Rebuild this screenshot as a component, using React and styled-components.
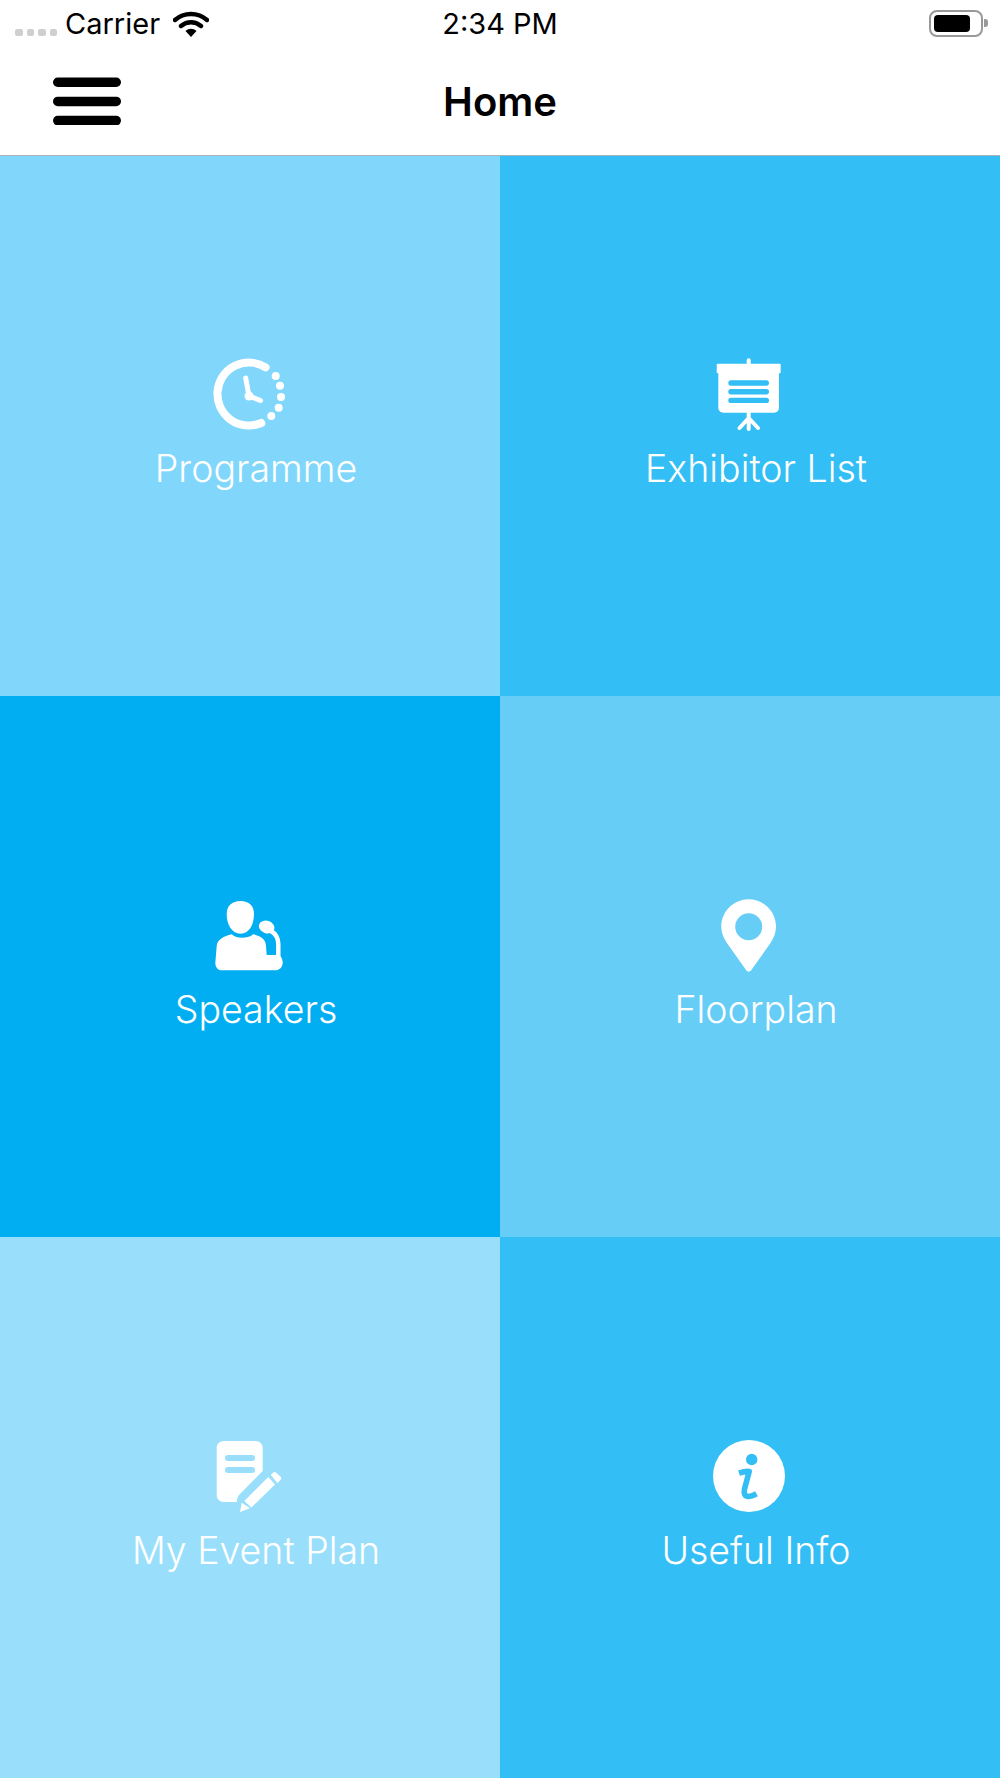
import React from "react"
import styled, { createGlobalStyle } from "styled-components"

const GlobalStyle = createGlobalStyle`
  html, body {
    margin: 0;
    padding: 0;
    background: #fff;
  }

  body {
    font-family: Inter, "Noto Sans", "Liberation Sans", sans-serif;
  }
`

const Screen = styled.div`
  display: flex;
  flex-direction: column;
  width: 1000px;
  height: 1778px;
  overflow: hidden;
`

const StatusBar = styled.div`
  display: grid;
  grid-template-columns: 1fr auto 1fr;
  align-items: center;
  box-sizing: border-box;
  height: 48px;
  padding-bottom: 2px;
  color: #000;
  font-size: 29px;
  flex: none;
`

const StatusLeft = styled.div`
  display: flex;
  align-items: center;
  padding-left: 15px;
`

const SignalDots = styled.div`
  display: flex;
  gap: 4px;
  margin: 19px 8px 0 0;
`

const SignalDot = styled.span`
  width: 7.5px;
  height: 7px;
  border-radius: 2px;
  background: #cfcfcf;
`

const Wifi = styled.svg`
  width: 36px;
  height: 26px;
  margin: 2px 0 0 13px;
`

const Battery = styled.div`
  justify-self: end;
  position: relative;
  box-sizing: border-box;
  width: 54px;
  height: 27px;
  margin-right: 17px;
  padding: 3px;
  border: 2px solid #999;
  border-radius: 8px;

  &::before {
    content: "";
    display: block;
    width: 36px;
    height: 17px;
    border-radius: 4px;
    background: #000;
  }

  &::after {
    content: "";
    position: absolute;
    top: 7px;
    right: -7px;
    width: 4px;
    height: 8px;
    border-radius: 0 3px 3px 0;
    background: #999;
  }
`

const NavBar = styled.div`
  display: grid;
  grid-template-columns: 1fr auto 1fr;
  align-items: center;
  box-sizing: border-box;
  height: 108px;
  border-bottom: 1px solid #a9b4ba;
  flex: none;
`

const MenuIcon = styled.svg`
  display: block;
  width: 68px;
  height: 48px;
  margin: 0 0 2px 53px;
  filter: blur(0.4px);
`

const Title = styled.div`
  font-size: 40px;
  font-weight: 600;
  color: #000;
`

const Grid = styled.div`
  display: grid;
  grid-template-columns: 1fr 1fr;
  grid-template-rows: 540px 541px 541px;
  flex: none;
`

const Tile = styled.div`
  display: flex;
  flex-direction: column;
  align-items: center;
  padding-top: 202.6px;
  box-sizing: border-box;
  background: ${props => props.$color};
  color: #fff;

  &:nth-child(-n + 2) {
    padding-top: 201.6px;
  }
`

const TileIcon = styled.svg`
  display: block;
  width: 72px;
  height: 73px;
  margin-right: 2px;
  overflow: visible;
`

const TileLabel = styled.div`
  margin-top: 16px;
  padding-left: 12px;
  font-size: 37.5px;
  line-height: 44px;
  font-weight: 300;
`

const ClockIcon = () => (
  <TileIcon viewBox="0 0 72 73">
    <path
      d="M52.6 9.3A31.5 31.5 0 1 0 48.3 65"
      fill="none"
      stroke="#fff"
      strokeWidth="8"
      strokeLinecap="round"
    />
    <circle cx="62.7" cy="18" r="4" fill="#fff" />
    <circle cx="67" cy="27.7" r="4" fill="#fff" />
    <circle cx="68" cy="39" r="4" fill="#fff" />
    <circle cx="65.7" cy="49.7" r="4" fill="#fff" />
    <circle cx="58.3" cy="58" r="4" fill="#fff" />
    <path
      d="M32.7 20L36 38L47.5 42.5"
      fill="none"
      stroke="#fff"
      strokeWidth="5"
      strokeLinecap="round"
      strokeLinejoin="round"
    />
    <circle cx="36" cy="38" r="4.5" fill="#fff" />
  </TileIcon>
)

const BoardIcon = ({ color }) => (
  <TileIcon viewBox="0 0 72 73">
    <rect x="33.7" y="0.3" width="4" height="7" rx="2" fill="#fff" />
    <rect x="3.7" y="5.7" width="64" height="9.5" rx="1" fill="#fff" />
    <rect x="5.3" y="10" width="60.7" height="44.7" rx="5" fill="#fff" />
    <rect x="15.3" y="22.3" width="40.7" height="5.4" rx="2.7" fill={color} />
    <rect x="15.3" y="31" width="40.7" height="5.4" rx="2.7" fill={color} />
    <rect x="15.3" y="39.7" width="40.7" height="5.4" rx="2.7" fill={color} />
    <path
      d="M35.7 54V71M26.5 70L35.7 60L45 70"
      fill="none"
      stroke="#fff"
      strokeWidth="4"
      strokeLinecap="round"
      strokeLinejoin="round"
    />
  </TileIcon>
)

const SpeakerIcon = () => (
  <TileIcon viewBox="0 0 72 73">
    <path
      d="M27.5 2C36 2 41 7 41 15C41 26 36 34.7 27.5 34.7C19 34.7 13.7 26 13.7 15C13.7 7 19 2 27.5 2Z"
      fill="#fff"
    />
    <path
      d="M18.7 35.3C22 38 25 38.7 28.7 38.7C33 38.7 37 38 40.3 35.3C47 37 53 40 53 47L53.7 56H64.3C68 56 69.7 60 69.7 63.7C69.7 68 66.5 71.3 62 71.3H8.7C4.5 71.3 2.3 67.5 2.3 64L3.7 47C4 41 11 37 18.7 35.3Z"
      fill="#fff"
    />
    <ellipse cx="53.7" cy="28" rx="8" ry="6.3" transform="rotate(20 53.7 28)" fill="#fff" />
    <path
      d="M58 32C63 35 65.3 39 65.3 45V58"
      fill="none"
      stroke="#fff"
      strokeWidth="4.5"
    />
  </TileIcon>
)

const PinIcon = () => (
  <TileIcon viewBox="0 0 72 73">
    <path
      fillRule="evenodd"
      d="M35.7 0.3C50.8 0.3 63 12.5 63 27.6C63 34 60.5 39.5 57.5 44L38 71.5C36.8 73 34.6 73 33.4 71.5L13.9 44C10.9 39.5 8.3 34 8.3 27.6C8.3 12.5 20.6 0.3 35.7 0.3ZM35.7 14.2A13.5 13.5 0 1 0 35.7 41.2A13.5 13.5 0 1 0 35.7 14.2Z"
      fill="#fff"
    />
  </TileIcon>
)

const NotesIcon = ({ color }) => (
  <TileIcon viewBox="0 0 72 73">
    <path
      d="M10.7 1H42.7C46.6 1 49.7 4.1 49.7 8V31L26.5 54.5C25 56 24.3 58 23.7 62H10.7C6.8 62 3.7 58.9 3.7 55V8C3.7 4.1 6.8 1 10.7 1Z"
      fill="#fff"
    />
    <rect x="12" y="15" width="30" height="6" rx="3" fill={color} />
    <rect x="12" y="27" width="30" height="6" rx="3" fill={color} />
    <path d="M31.3 61L55.3 37L62 44.5L38.3 67.5Z" fill="#fff" />
    <path d="M27 72L28.7 62.7L37 68.3Z" fill="#fff" />
    <path
      d="M57.8 35L60.3 32.5C61 31.7 62.2 31.7 63 32.5L67.8 37C68.5 37.7 68.5 38.8 67.8 39.5L64.5 43.2Z"
      fill="#fff"
    />
  </TileIcon>
)

const InfoIcon = ({ color }) => (
  <TileIcon viewBox="0 0 72 73">
    <circle cx="36" cy="36" r="36" fill="#fff" />
    <circle cx="38.7" cy="19.5" r="5.7" fill={color} />
    <path
      d="M26 33.2C30 31.8 33 31 36.2 31.5L31.5 49C30.5 54 32 56.5 35.5 56.5C38 56.5 40.5 55.5 43.5 53.8"
      fill="none"
      stroke={color}
      strokeWidth="5.6"
      strokeLinejoin="round"
    />
  </TileIcon>
)

const tiles = [
  { label: "Programme", color: "#80D7FB", Icon: ClockIcon },
  { label: "Exhibitor List", color: "#33BEF5", Icon: BoardIcon },
  { label: "Speakers", color: "#00AEF1", Icon: SpeakerIcon },
  { label: "Floorplan", color: "#66CDF7", Icon: PinIcon },
  { label: "My Event Plan", color: "#99DFFB", Icon: NotesIcon },
  { label: "Useful Info", color: "#33BEF5", Icon: InfoIcon },
]

const App = () => (
  <Screen>
    <GlobalStyle />
    <StatusBar>
      <StatusLeft>
        <SignalDots>
          <SignalDot />
          <SignalDot />
          <SignalDot />
          <SignalDot />
        </SignalDots>
        Carrier
        <Wifi viewBox="0 0 36 26">
          <path
            d="M2 9C11 1 25 1 34 9M8 15C14 10 22 10 28 15"
            fill="none"
            stroke="#000"
            strokeWidth="4.4"
            strokeLinecap="round"
          />
          <path d="M12.5 20C16 17 20 17 23.5 20L18 26Z" fill="#000" />
        </Wifi>
      </StatusLeft>
      <div>2:34 PM</div>
      <Battery />
    </StatusBar>
    <NavBar>
      <MenuIcon viewBox="0 0 68 48">
        <rect x="0" y="0.5" width="68" height="9.5" rx="4.7" />
        <rect x="0" y="19.7" width="68" height="9.5" rx="4.7" />
        <rect x="0" y="38.8" width="68" height="9.5" rx="4.7" />
      </MenuIcon>
      <Title>Home</Title>
    </NavBar>
    <Grid>
      {tiles.map(({ label, color, Icon }) => (
        <Tile key={label} $color={color}>
          <Icon color={color} />
          <TileLabel>{label}</TileLabel>
        </Tile>
      ))}
    </Grid>
  </Screen>
)

export default App
